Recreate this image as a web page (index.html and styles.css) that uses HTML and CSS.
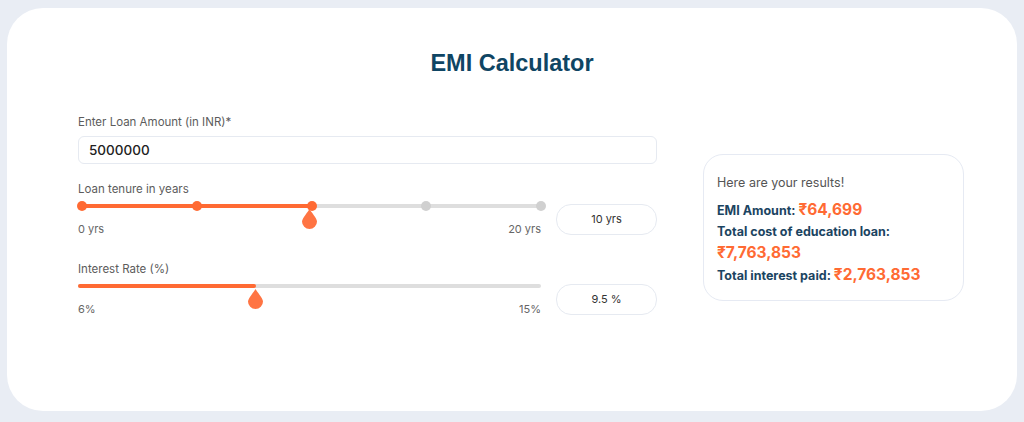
FILE: index.html
```html
<!DOCTYPE html>
<html lang="en">
<head>
    <meta charset="UTF-8">
    <meta name="viewport" content="width=device-width, initial-scale=1.0">
    <title>EMI Calculator</title>
    <link rel="stylesheet" href="styles.css">
</head>
<body>
    <div class="card">
        <h1 class="title">EMI Calculator</h1>
        <div class="calc">
            <div class="inputs">
                <div class="field">
                    <label class="label">Enter Loan Amount (in INR)*</label>
                    <div class="amount">5000000</div>
                </div>

                <div class="field slider-field">
                    <label class="label">Loan tenure in years</label>
                    <div class="slider-row">
                        <div class="slider">
                            <div class="track">
                                <div class="fill" style="width: 50%"></div>
                                <div class="steps">
                                    <span class="step on"></span>
                                    <span class="step on"></span>
                                    <span class="step on"></span>
                                    <span class="step"></span>
                                    <span class="step"></span>
                                </div>
                                <svg class="thumb" style="left: 50%" width="15" height="20" viewBox="0 0 15 20"><path d="M7.5 0 C6.5 2 0 9.5 0 12.5 A7.5 7.5 0 0 0 15 12.5 C15 9.5 8.5 2 7.5 0 Z" fill="#ff7443"/></svg>
                            </div>
                            <div class="ends"><span>0 yrs</span><span>20 yrs</span></div>
                        </div>
                        <div class="value-box">10 yrs</div>
                    </div>
                </div>

                <div class="field slider-field">
                    <label class="label">Interest Rate (%)</label>
                    <div class="slider-row">
                        <div class="slider">
                            <div class="track">
                                <div class="fill" style="width: 38.5%"></div>
                                <svg class="thumb" style="left: 38.5%" width="15" height="20" viewBox="0 0 15 20"><path d="M7.5 0 C6.5 2 0 9.5 0 12.5 A7.5 7.5 0 0 0 15 12.5 C15 9.5 8.5 2 7.5 0 Z" fill="#ff7443"/></svg>
                            </div>
                            <div class="ends"><span>6%</span><span>15%</span></div>
                        </div>
                        <div class="value-box">9.5 %</div>
                    </div>
                </div>
            </div>

            <div class="results">
                <p class="results-head">Here are your results!</p>
                <p class="line">EMI Amount: <span class="num">₹64,699</span></p>
                <p class="line">Total cost of education loan: <span class="num">₹7,763,853</span></p>
                <p class="line">Total interest paid: <span class="num">₹2,763,853</span></p>
            </div>
        </div>
    </div>
</body>
</html>
```

FILE: styles.css
```css
html, body {
    margin: 0;
    height: 100%;
    background-color: #e9edf4;
    font-family: 'Inter', 'Noto Sans', sans-serif;
    color: #333;
}

body {
    padding: 8px 7px 11px 7px;
    box-sizing: border-box;
}

.card {
    height: 100%;
    background-color: #fff;
    border-radius: 36px;
    box-sizing: border-box;
    padding: 42px 0 0 71px;
}

.title {
    margin: 0 0 38px 0;
    padding-right: 71px;
    text-align: center;
    font-family: 'Liberation Sans', Arial, sans-serif;
    font-size: 23.5px;
    font-weight: bold;
    color: #0f4563;
}

.calc {
    display: flex;
    align-items: flex-start;
    gap: 46px;
}

.inputs {
    width: 579px;
}

.field {
    margin-bottom: 18px;
}

.slider-field {
    margin-bottom: 26px;
}

.label {
    display: block;
    font-size: 11.5px;
    color: #5c5c5c;
    margin-bottom: 7px;
}

.amount {
    height: 28px;
    border: 1px solid #e6eaf1;
    border-radius: 6px;
    box-sizing: border-box;
    padding: 0 10px;
    line-height: 26px;
    font-size: 13.5px;
    font-weight: 500;
    color: #222;
}

.slider-row {
    display: flex;
    align-items: center;
    gap: 15px;
}

.slider {
    flex: 1;
    padding-top: 1px;
}

.track {
    position: relative;
    height: 4px;
    border-radius: 2px;
    background-color: #dedede;
}

.fill {
    height: 100%;
    border-radius: 2px;
    background-color: #ff6a33;
}

.steps {
    position: absolute;
    top: -3px;
    left: -1px;
    right: -5px;
    display: flex;
    justify-content: space-between;
}

.step {
    width: 10px;
    height: 10px;
    border-radius: 50%;
    background-color: #d0d0d0;
}

.step.on {
    background-color: #ff6a33;
}

.thumb {
    position: absolute;
    top: 5px;
    margin-left: -8px;
}

.ends {
    display: flex;
    justify-content: space-between;
    margin-top: 14px;
    font-size: 11px;
    color: #666;
}

.value-box {
    width: 101px;
    height: 31px;
    box-sizing: border-box;
    border: 1px solid #e6eaf1;
    border-radius: 15px;
    text-align: center;
    line-height: 29px;
    font-size: 11px;
    color: #333;
}

.results {
    width: 261px;
    box-sizing: border-box;
    border: 1px solid #e6eaf3;
    border-radius: 20px;
    padding: 20px 12px 14px 13px;
    margin-top: 39px;
}

.results p {
    margin: 0;
}

.results-head {
    font-size: 12.5px;
    color: #555;
    margin-bottom: 9px !important;
}

.line {
    font-size: 12.5px;
    font-weight: bold;
    color: #1b4461;
    line-height: 21px;
}

.num {
    font-size: 15.5px;
    color: #ff6a33;
}
```
